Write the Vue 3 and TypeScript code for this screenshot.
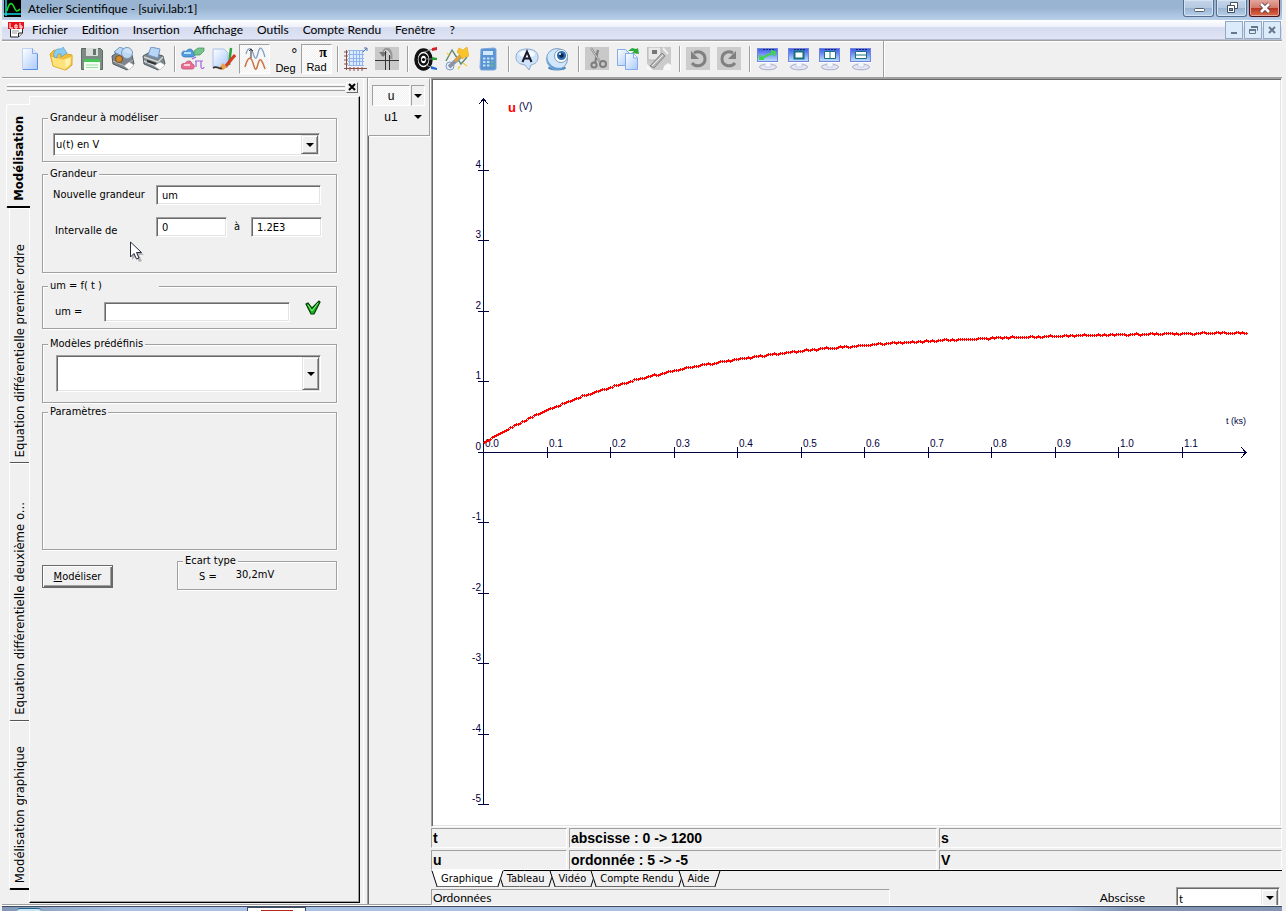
<script setup lang="ts">
import { ref } from 'vue'

const menus: string[] = ['Fichier', 'Edition', 'Insertion', 'Affichage', 'Outils', 'Compte Rendu', 'Fenêtre', '?']

interface ModelTab { id: string; label: string }
const modelTabs: ModelTab[] = [
  { id: 'modelisation', label: 'Modélisation' },
  { id: 'ordre1', label: 'Equation différentielle premier ordre' },
  { id: 'ordre2', label: 'Equation différentielle deuxième o...' },
  { id: 'graphique', label: 'Modélisation graphique' },
]
const activeModelTab = ref('modelisation')

const sheetTabs: string[] = ['Graphique', 'Tableau', 'Vidéo', 'Compte Rendu', 'Aide']
const activeSheet = ref('Graphique')

const target = ref('u(t) en V')
const newName = ref('um')
const from = ref('0')
const to = ref('1.2E3')
const expression = ref('')
const preset = ref('')
const abscissa = ref('t')

const originX = 51
const originY = 372
const pxPerUnitY = 70.5
const pxPerTenth = 63.5

const yTicks = [4, 3, 2, 1, 0, -1, -2, -3, -4, -5].map((v) => ({
  label: String(v),
  y: Math.floor(originY - v * pxPerUnitY),
}))
const xTicks = Array.from({ length: 12 }, (_, i) => ({
  label: (i / 10).toFixed(1),
  x: Math.round(originX + i * pxPerTenth),
}))

function voltage(t: number): number {
  return 1.72 - 1.58 * Math.exp(-t / 0.29)
}

// Each sample is drawn as a small plus sign.
const samples = Array.from({ length: 382 }, (_, i) => {
  const x = originX + i * 2
  const t = (i * 2) / pxPerTenth / 10
  const noise = i > 12 ? Math.sin(i * 1.9) * 0.4 + Math.sin(i * 0.73) * 0.4 : 0
  const y = Math.round(originY - voltage(t) * pxPerUnitY + noise)
  return `M${x - 1} ${y + 0.5}h3M${x + 0.5} ${y - 1}v3`
}).join('')
</script>

<template>
  <div class="window">
    <header class="titlebar">
      <svg class="app-icon" width="17" height="17" viewBox="0 0 17 17" aria-hidden="true">
        <rect width="17" height="17" fill="#000" />
        <path d="M2 0V16M0 14H17" stroke="#12d6e0" stroke-width="1.5" fill="none" />
        <path d="M3 11C5 2 8 2 10 7S13 12 16 9" stroke="#19e01c" stroke-width="1.6" fill="none" />
      </svg>
      <span class="title">Atelier Scientifique - [suivi.lab:1]</span>
      <div class="win-buttons">
        <button class="win-btn" type="button" aria-label="Réduire">
          <svg width="28" height="15" viewBox="0 0 28 15"><rect x="9.5" y="8.5" width="10" height="3" rx="1" fill="#fff" stroke="#55606f" /></svg>
        </button>
        <button class="win-btn" type="button" aria-label="Restaurer">
          <svg width="28" height="15" viewBox="0 0 28 15"><path d="M12.500 2.500h7v6h-7z" fill="#fff" stroke="#454f60" /><path d="M9.500 5.500h7v7h-7z" fill="#fff" stroke="#454f60" /><rect x="11.500" y="8.500" width="3" height="2" fill="#7d97b8" stroke="#454f60" /></svg>
        </button>
        <button class="win-btn close" type="button" aria-label="Fermer">
          <svg width="28" height="15" viewBox="0 0 28 15"><path d="M10 4l8 8M18 4l-8 8" stroke="#5c4048" stroke-width="4.500" /><path d="M10 4l8 8M18 4l-8 8" stroke="#fff" stroke-width="2.600" /></svg>
        </button>
      </div>
    </header>

    <nav class="menubar">
      <svg class="doc-icon" width="17" height="17" viewBox="0 0 17 17" aria-hidden="true">
        <path d="M2.500 3h12v9l-4 4h-8z" fill="#fff" stroke="#222" />
        <path d="M10.500 16v-4h4" fill="#ddd" stroke="#222" />
        <rect x="0" y="1" width="16" height="7" fill="#e8141c" />
        <path d="M2 2v5h3M7 4h2v3H7zM12 2v5h2V5h-2" stroke="#fff" fill="none" />
        <path d="M4 10h7M4 12h5" stroke="#999" />
      </svg>
      <button v-for="m in menus" :key="m" class="menu" type="button">{{ m }}</button>
      <div class="child-buttons">
        <button class="child-btn" type="button" aria-label="Réduire le document"><svg width="16" height="16"><path d="M5 11h6" stroke="#66788e" stroke-width="2" /></svg></button>
        <button class="child-btn" type="button" aria-label="Restaurer le document"><svg width="16" height="16"><path d="M6.500 5V4.500h6v4H12M4.500 7.500h6v4h-6z" fill="none" stroke="#66788e" /><path d="M6 5h7M4 8h7" stroke="#66788e" stroke-width="2" /></svg></button>
        <button class="child-btn" type="button" aria-label="Fermer le document"><svg width="16" height="16"><path d="M5 5l6 6M11 5l-6 6" stroke="#66788e" stroke-width="2" /></svg></button>
      </div>
    </nav>

    <div class="toolbar" role="toolbar" aria-label="Outils">
      <button class="tool" type="button" aria-label="Nouveau">
        <svg viewBox="0 0 24 24"><defs><linearGradient id="paper" x1="0" y1="0" x2="1" y2="1"><stop offset="0" stop-color="#fff" /><stop offset="1" stop-color="#a9c9fb" /></linearGradient></defs><path d="M4.500 1.500h10l5 5v16h-15z" fill="url(#paper)" stroke="#bcd2f4" /><path d="M19.500 7v15.500H5" fill="none" stroke="#5d8fe0" /><path d="M14.500 1.500v5h5" fill="#dbe8ff" stroke="#86aceb" /></svg>
      </button>
      <button class="tool" type="button" aria-label="Ouvrir">
        <svg viewBox="0 0 24 24"><path d="M1 7l4-4 6 1 2 2 10 2v10l-6 5L4 19z" fill="#f3bf3a" stroke="#dba52a" /><path d="M2 9l12 3 9-3-1 9-6 5-12-4z" fill="#ffe27a" stroke="#e9b93c" /><path d="M16 13l5-2v6l-4 4z" fill="#fff0ae" /><path d="M5 10c-1-6 2-9 8-8l1-2 4 6-6 4V7C9 6 8 8 8 11z" fill="#8bcdf0" stroke="#4a97cb" stroke-width=".6" /></svg>
      </button>
      <button class="tool" type="button" aria-label="Enregistrer">
        <svg viewBox="0 0 24 24"><path d="M1.500 1.500h19l2 2v19h-21z" fill="#7e8b84" stroke="#5d6963" /><rect x="6" y="1" width="12" height="8" fill="#d9dedb" /><rect x="13" y="2" width="3" height="6" fill="#68746e" /><rect x="4" y="12" width="16" height="11" fill="#f2fff0" /><path d="M4 12h16v3H4z" fill="#46c65a" /><path d="M6 18h12M6 20.500h12" stroke="#9fdba6" /></svg>
      </button>
      <button class="tool" type="button" aria-label="Aperçu avant impression">
        <svg viewBox="0 0 24 24"><path d="M1 9l7-5 13 4 2 9-7 6-14-6z" fill="#7d868d" stroke="#545b61" /><path d="M2 14l12 5 8-6" fill="none" stroke="#b9bfc4" /><path d="M3 5l6-5 4 2-2 7z" fill="#b9d8f7" stroke="#6f95c3" /><circle cx="16" cy="6" r="5.500" fill="#c6e2fb" fill-opacity=".9" stroke="#7d97b5" /><path d="M12 10l-2 2" stroke="#777" stroke-width="2" /><circle cx="8" cy="12" r="3.500" fill="#d28a2d" stroke="#7c4d13" /><path d="M13 19l5-4 5 3-5 5z" fill="#fff" stroke="#aaa" stroke-width=".6" /></svg>
      </button>
      <button class="tool" type="button" aria-label="Imprimer">
        <svg viewBox="0 0 24 24"><path d="M1 9l7-4 13 4 2 8-7 6-14-6z" fill="#7d868d" stroke="#545b61" /><path d="M6 8L9 0l9 2-2 9z" fill="#b7d5f7" stroke="#6f95c3" /><path d="M2 10l14 5 5-5M2 14l12 5" fill="none" stroke="#d5d9dc" stroke-width="1.400" /><path d="M5 14l9 3" stroke="#333" stroke-width="2" /><path d="M12 19l6-4 5 3-5 5z" fill="#fff" stroke="#aaa" stroke-width=".6" /></svg>
      </button>
      <span class="sep"></span>
      <button class="tool" type="button" aria-label="Variables">
        <svg viewBox="0 0 24 24"><path d="M1 8c-1-4 3-5 4-3 1-4 7-4 7 0 3 0 3 5-1 5H4c-2 0-3-1-3-2z" fill="#4f9de0" stroke="#2d6fae" stroke-width=".7" /><path d="M3 6h7" stroke="#b9e0ff" stroke-width="2" /><path d="M13 4l4-3h6v3l-4 4h-6z" fill="#72c58b" stroke="#3f9159" stroke-width=".7" /><path d="M0 20c0-4 3-4 4-3 1-4 7-4 7 0 3 0 3 5 0 5H3c-2 0-3-1-3-2z" fill="#ea6f93" stroke="#b43e63" stroke-width=".7" /><path d="M3 18h6" stroke="#ffd0de" stroke-width="2" /><path d="M14 14h8M15 14v6M20 14v6c0 2 3 2 3 0M11 12l4-2" fill="none" stroke="#a066d8" stroke-width="1.200" /></svg>
      </button>
      <button class="tool" type="button" aria-label="Dessiner">
        <svg viewBox="0 0 24 24"><path d="M1 2h11l4 4v14H1z" fill="url(#paper)" stroke="#a9c0e6" /><path d="M19 1l-2 17" stroke="#2ca43b" stroke-width="2.500" /><path d="M23 8L13 20" stroke="#d93a24" stroke-width="3" /><path d="M11 16l4 4-4 3-5-1z" fill="#e9a04b" /><path d="M1 21c4-3 6 2 9 0" stroke="#333" stroke-width="1.600" fill="none" /></svg>
      </button>
      <button class="tool pressed" type="button" aria-label="Courbe" aria-pressed="true">
        <svg viewBox="0 0 24 24"><path d="M3 7C5 0 8 0 10 6S13 14 15 6s4-6 7 4" fill="none" stroke="#7f9fc4" stroke-width="1.300" /><path d="M2 20C5 9 8 9 10 16s3 9 5 1 4-4 7 5" fill="none" stroke="#cc7648" stroke-width="1.500" /><path d="M8 2v9M6 4l2-2 2 2" stroke="#333" fill="none" /></svg>
      </button>
      <button class="tool angle" type="button"><span class="symbol">°</span><span>Deg</span></button>
      <button class="tool angle pressed" type="button" aria-pressed="true"><span class="symbol">π</span><span>Rad</span></button>
      <span class="sep"></span>
      <button class="tool" type="button" aria-label="Grille">
        <svg viewBox="0 0 24 24"><path d="M5 3h14v15H5z" fill="#dcebff" /><path d="M5.500 3v16M9.500 3v16M12.500 3v16M15.500 3v16M18.500 3v16M4 3.500h16M4 7.500h16M4 11.500h16M4 14.500h16M4 18.500h16" stroke="#8fb3ea" /><path d="M2.500 3v20M0 21.500h23M0 5h4M0 9h4M0 13h4M0 17h4M6 20v4M10 20v4M14 20v4M18 20v4" stroke="#86514b" /><path d="M19 5l4-4M20 1h3v3" stroke="#5274a8" fill="none" /></svg>
      </button>
      <button class="tool" type="button" aria-label="Réticule">
        <svg viewBox="0 0 24 24"><rect width="24" height="23" fill="#c9c9c9" /><path d="M8 9c0-9 8-9 8 0v3" fill="none" stroke="#999" stroke-width="3" /><path d="M8 9c0-7 6-7 7 0" fill="none" stroke="#eee" /><path d="M4 5h8l-4 5z" fill="#777" /><path d="M0 13.500h24M10.500 4v19M14.500 8v15" stroke="#333" /></svg>
      </button>
      <span class="sep"></span>
      <button class="tool" type="button" aria-label="Pointage">
        <svg viewBox="0 0 24 24"><ellipse cx="9.500" cy="12.500" rx="7.500" ry="9.500" fill="#fff" stroke="#111" stroke-width="3.500" /><ellipse cx="9.500" cy="12.500" rx="3.800" ry="5" fill="#fff" stroke="#111" stroke-width="2.600" /><circle cx="9.500" cy="12.500" r="1.600" /><path d="M10 5l9-3M11 12h8M12 18l7 3" stroke="#888" /><path d="M18 1l5-1v3l-5 1z" fill="#d8202a" /><path d="M18 10l5 1v2l-5 0z" fill="#24a32c" /><path d="M17 19l6 2v2l-6-1z" fill="#2366d8" /></svg>
      </button>
      <button class="tool" type="button" aria-label="Assistant">
        <svg viewBox="0 0 24 24"><path d="M1 14L7 3l9 14 6-7" fill="none" stroke="#5f8b71" stroke-width="1.400" /><circle cx="5" cy="19" r="4" fill="#e6f2ff" stroke="#7c9cc4" /><path d="M4 20L16 9" stroke="#8a94a3" stroke-width="3.800" /><path d="M10 14l5-5" stroke="#e3a33a" stroke-width="3" /><path d="M14 1l4 2 4-3 1 5 1 4-4 1-3 2-2-4-3-3z" fill="#f9c42a" stroke="#e5a313" stroke-width=".6" /><path d="M18 16l4 3M2 6l2 2M13 22l2-3" stroke="#f5cf3e" stroke-width="1.500" /></svg>
      </button>
      <button class="tool" type="button" aria-label="Calculatrice">
        <svg viewBox="0 0 24 24"><path d="M5 2l13-1 2 1v20l-2 1H5l-1-2z" fill="#5b93d3" stroke="#7ba7d8" /><rect x="7" y="4" width="10" height="4" fill="#cfeaff" /><path d="M7 11.500h2.500M11 11.500h2.500M15 11.500h2.500M7 15h2.500M11 15h2.500M7 18.500h2.500M11 18.500h2.500" stroke="#bfe2fa" stroke-width="2" /><path d="M15 15h2.500M15 18.500h2.500" stroke="#59c27c" stroke-width="2" /></svg>
      </button>
      <span class="sep"></span>
      <button class="tool" type="button" aria-label="Commentaire">
        <svg viewBox="0 0 24 24"><path d="M12 2c7 0 11 3 11 8s-3 7-7 8l-2 5-4-5C4 17 1 15 1 10s4-8 11-8z" fill="#cfe3fa" stroke="#8bacd6" /><ellipse cx="12" cy="7" rx="8" ry="3.500" fill="#f4faff" /><path d="M7.500 15L12 4.500l4.500 10.500M9 11.500h6" fill="none" stroke="#1a1a2a" stroke-width="2" /></svg>
      </button>
      <button class="tool" type="button" aria-label="Webcam">
        <svg viewBox="0 0 24 24"><ellipse cx="11" cy="21" rx="9" ry="2.500" fill="#4e88bd" /><circle cx="11" cy="12" r="10.500" fill="#cfe6fb" stroke="#7aa1c9" /><path d="M1 9c1 9 8 14 17 11C10 26 0 20 1 9z" fill="#5d9ad4" /><circle cx="15" cy="9" r="6.500" fill="#fff" stroke="#829bb5" /><circle cx="15.500" cy="8.500" r="4.600" fill="#2d6fb4" /><circle cx="15.500" cy="8.500" r="2.300" fill="#0d2647" /><circle cx="14" cy="7" r="1" fill="#fff" /></svg>
      </button>
      <span class="sep"></span>
      <button class="tool" type="button" aria-label="Couper" disabled>
        <svg viewBox="0 0 24 24"><rect width="24" height="23" fill="#c9c9c9" /><path d="M6 1l9 14M13 3l-3 13" stroke="#808080" stroke-width="2.200" /><path d="M6 1l9 14" stroke="#ededed" stroke-width=".7" /><circle cx="9" cy="18" r="2.600" fill="none" stroke="#7d7d7d" stroke-width="2" /><circle cx="18" cy="17" r="3" fill="none" stroke="#7d7d7d" stroke-width="2" /></svg>
      </button>
      <button class="tool" type="button" aria-label="Copier">
        <svg viewBox="0 0 24 24"><path d="M1.500 2.500h8l4 4v12h-12z" fill="url(#paper)" stroke="#83abeb" /><path d="M9.500 6.500h8l4 4v12h-12z" fill="url(#paper)" stroke="#83abeb" /><path d="M17.500 7v4h4" fill="#fff" stroke="#83abeb" /><path d="M12 4l4-3 4 1 2-1 1 6-7-1 2-2z" fill="#2aa939" /></svg>
      </button>
      <button class="tool" type="button" aria-label="Coller" disabled>
        <svg viewBox="0 0 24 24"><rect width="24" height="23" fill="#cbcbcb" /><path d="M1 0h13v13H1z" fill="#e9e9e9" stroke="#b5b5b5" /><path d="M5 3h5v4H5z" fill="#777" /><path d="M3 19L15 6l3 3L7 21z" fill="#b4b4b4" stroke="#888" /><path d="M5 19L16 8" stroke="#eee" /><path d="M0 17l6 6H0zM17 19l4-3 3 2v5h-8z" fill="#f8f8f8" /><path d="M16 1l5 6" stroke="#eee" stroke-width="2" /></svg>
      </button>
      <span class="sep"></span>
      <button class="tool" type="button" aria-label="Annuler" disabled>
        <svg viewBox="0 0 24 24"><rect width="24" height="23" fill="#cdcdcd" /><path d="M8 6c5-3 11 0 11 6 0 7-9 9-13 4" fill="none" stroke="#808080" stroke-width="3" /><path d="M5 4v8h8z" fill="#808080" /></svg>
      </button>
      <button class="tool" type="button" aria-label="Rétablir" disabled>
        <svg viewBox="0 0 24 24"><rect width="24" height="23" fill="#cdcdcd" /><path d="M16 6C11 3 5 6 5 12c0 7 9 9 13 4" fill="none" stroke="#808080" stroke-width="3" /><path d="M19 4v8h-8z" fill="#808080" /></svg>
      </button>
      <span class="sep"></span>
      <button v-for="kind in 4" :key="kind" class="tool" type="button" :aria-label="'Disposition ' + kind">
        <svg viewBox="0 0 24 24"><defs><linearGradient id="screen" x1="0" y1="0" x2="0" y2="1"><stop offset="0" stop-color="#3c55e8" /><stop offset="1" stop-color="#bfe3ff" /></linearGradient></defs>
          <ellipse cx="12" cy="20" rx="8.500" ry="2.800" fill="#e6e9f4" stroke="#a9adc6" /><path d="M9 15h6v5H9z" fill="#f3f5fc" stroke="#b5bcd6" stroke-width=".6" />
          <rect x="1.500" y="1.500" width="20" height="13" fill="url(#screen)" stroke="#6f86dc" /><path d="M1 15.500h21" stroke="#fff" /><path d="M7 2.500h12" stroke="#14246e" stroke-dasharray="2 1" />
          <path v-if="kind === 1" d="M4 11l4-1 4-2 5-2M4 8v4h4M15 4l4 1-1 4" fill="none" stroke="#3fd54d" stroke-width="2" />
          <rect v-if="kind === 2" x="7.500" y="4.500" width="9" height="7" fill="#fff" stroke="#14727f" stroke-width="2" />
          <path v-if="kind === 3" d="M6.500 4.500h11v7h-11zM12 4v8" fill="#fff" stroke="#14727f" />
          <path v-if="kind === 4" d="M6.500 4.500h11v7h-11zM6 8h12" fill="#fff" stroke="#14727f" />
        </svg>
      </button>
      <span class="sep end"></span>
    </div>

    <div class="workspace">
      <aside class="dock">
        <div class="dock-head">
          <div class="grip"><i></i><i></i></div>
          <button class="dock-close" type="button" aria-label="Fermer le panneau"><svg width="10" height="8"><path d="M2 1l6 6M8 1l-6 6" stroke="#000" stroke-width="2" /></svg></button>
        </div>
        <div class="dock-body">
          <div class="vtabs" role="tablist" aria-orientation="vertical">
            <button
              v-for="t in modelTabs"
              :key="t.id"
              type="button"
              role="tab"
              class="vtab"
              :class="[t.id, { active: t.id === activeModelTab }]"
              :aria-selected="t.id === activeModelTab"
              @click="activeModelTab = t.id"
            ><span>{{ t.label }}</span></button>
          </div>

          <form class="model" @submit.prevent>
            <fieldset class="f-target">
              <legend>Grandeur à modéliser</legend>
              <div class="combo sunken">
                <select v-model="target" aria-label="Grandeur à modéliser"><option>u(t) en V</option><option>u1(t) en V</option></select>
                <span class="drop"></span>
              </div>
            </fieldset>

            <fieldset class="f-name">
              <legend>Grandeur</legend>
              <div class="grid">
                <label for="new-name">Nouvelle grandeur</label>
                <input id="new-name" v-model="newName" class="sunken wide" type="text" />
                <label for="from" class="low">Intervalle de</label>
                <input id="from" v-model="from" class="sunken" type="text" />
                <label for="to" class="to">à</label>
                <input id="to" v-model="to" class="sunken" type="text" />
              </div>
              <svg class="pointer" width="16" height="22" viewBox="0 0 16 22" aria-hidden="true"><path d="M3 3v16l4-4 3 6 3-1-3-6h5z" fill="#000" opacity=".25" /><path d="M1.500 1v15l3.500-3.500 2.500 5.500 2.500-1-2.500-5.500h5z" fill="#fff" stroke="#222a3c" /></svg>
            </fieldset>

            <fieldset class="f-expr">
              <legend>um = f( t )</legend>
              <div class="line">
                <label for="expr">um =</label>
                <input id="expr" v-model="expression" class="sunken" type="text" />
                <button class="check" type="button" aria-label="Valider">
                  <svg width="17" height="17" viewBox="0 0 17 17"><path d="M1 4l2-1 4 5 7-7 1 1L9 14H6z" fill="#17b81d" stroke="#053d08" stroke-width="1.200" /><path d="M3 5l4 6 6-8" fill="none" stroke="#8bf08d" /></svg>
                </button>
              </div>
            </fieldset>

            <fieldset class="f-preset">
              <legend>Modèles prédéfinis</legend>
              <div class="combo sunken tall">
                <select v-model="preset" aria-label="Modèles prédéfinis"><option value=""></option></select>
                <span class="drop"></span>
              </div>
            </fieldset>

            <fieldset class="f-params"><legend>Paramètres</legend></fieldset>

            <div class="result">
              <button class="run" type="submit"><u>M</u>odéliser</button>
              <fieldset class="f-dev">
                <legend>Ecart type</legend>
                <div class="dev"><span>S =</span><output>30,2mV</output></div>
              </fieldset>
            </div>
          </form>
        </div>
      </aside>

      <div class="vars">
        <div class="var-bar">
          <div class="var"><button class="var-name on" type="button" aria-pressed="true">u</button><button class="var-drop on" type="button" aria-label="Options de u"></button></div>
          <div class="var"><button class="var-name" type="button">u1</button><button class="var-drop" type="button" aria-label="Options de u1"></button></div>
        </div>
      </div>

      <main class="main">
        <div class="chart sunken">
          <svg viewBox="0 0 847 744" preserveAspectRatio="xMinYMin meet" role="img" aria-label="u en fonction de t">
            <g stroke="#000040" shape-rendering="crispEdges" fill="none">
              <path d="M50.500 19V724M46 24l4.500-5 4.500 5" />
              <path d="M45 372.500H812M808 367l5 5.500-5 5.500" />
              <path v-for="t in yTicks" :key="t.label" :d="`M45 ${t.y + 0.5}h11`" />
              <path v-for="t in xTicks.slice(1)" :key="t.label" :d="`M${t.x - 0.5} 367v11`" />
            </g>
            <g class="axis">
              <text v-for="t in yTicks" :key="t.label" x="48" :y="t.y - 2" text-anchor="end">{{ t.label }}</text>
              <text v-for="t in xTicks" :key="t.label" :x="t.x + 1" y="367">{{ t.label }}</text>
              <text x="813" y="344" text-anchor="end" class="unit">t (ks)</text>
              <text x="86" y="30">(V)</text>
            </g>
            <text x="75" y="32" class="series">u</text>
            <path :d="samples" fill="none" stroke="#f00" shape-rendering="crispEdges" />
          </svg>
        </div>

        <div class="info">
          <div>t</div><div>abscisse : 0 -&gt; 1200</div><div>s</div>
          <div>u</div><div>ordonnée : 5 -&gt; -5</div><div>V</div>
        </div>

        <div class="sheets" role="tablist">
          <button
            v-for="s in sheetTabs"
            :key="s"
            type="button"
            role="tab"
            class="sheet"
            :class="{ active: s === activeSheet }"
            :aria-selected="s === activeSheet"
            @click="activeSheet = s"
          ><span>{{ s }}</span></button>
          <i class="rule"></i>
        </div>

        <div class="status">
          <div class="status-text">Ordonnées</div>
          <label for="abscissa">Abscisse</label>
          <div class="combo sunken abscissa">
            <select id="abscissa" v-model="abscissa"><option>t</option></select>
            <span class="drop"></span>
          </div>
        </div>
      </main>
    </div>

    <footer class="taskbar" aria-hidden="true"><i class="orb"></i><i class="task"></i></footer>
  </div>
</template>

<style>
html,
body {
  background: #f0f0f0;
}
</style>

<style scoped>
* {
  box-sizing: border-box;
}
.window {
  min-height: 100vh;
  padding: 0 4px 0 2px;
  display: flex;
  flex-direction: column;
  background: #f0f0f0;
  color: #000;
  font: 11px/14px "DejaVu Sans Condensed", "Noto Sans", sans-serif;
}
button,
input,
select {
  font: inherit;
  color: inherit;
  margin: 0;
  padding: 0;
  border: 0;
  border-radius: 0;
  background: none;
}
svg {
  display: block;
}
.sunken {
  border: 1px solid;
  border-color: #a0a0a0 #fff #fff #a0a0a0;
  box-shadow: inset 1px 1px #696969, inset -1px -1px #e3e3e3;
}

.titlebar {
  height: 20px;
  display: flex;
  align-items: flex-start;
  padding-left: 2px;
  background: linear-gradient(#98b4d2, #99b4d1 40%, #b9d0ea);
}
.title {
  flex: 1;
  padding-left: 7px;
  font: 12px/18px Lato, "Noto Sans", sans-serif;
}
.win-buttons {
  display: flex;
  gap: 2px;
  padding-right: 2px;
}
.win-btn {
  width: 31px;
  height: 17px;
  display: flex;
  justify-content: center;
  border: 1px solid #55708f;
  border-top: 0;
  border-radius: 0 0 3px 3px;
  background: linear-gradient(#c5d5e9, #b4c8e0 50%, #98b3d2 50%, #b8d0ea);
  box-shadow: inset 0 0 0 1px #d5e2f1;
}
.win-btn.close {
  border-color: #4d1018;
  background: linear-gradient(#e3a79b, #d3796a 50%, #b83322 50%, #d86f4b);
  box-shadow: inset 0 0 0 1px #e2a59b;
}
.menubar {
  height: 20px;
  display: flex;
  align-items: center;
  padding-left: 6px;
  background: linear-gradient(#fff, #eef1f9 35%, #d5dcef 40%, #e0e4f4);
  border-bottom: 1px solid #b9bed0;
  font: 12px/18px Lato, "Noto Sans", sans-serif;
}
.doc-icon {
  margin-right: 7px;
}
.menu {
  margin-right: 14px;
}
.child-buttons {
  margin-left: auto;
  display: flex;
  gap: 1px;
  padding-right: 1px;
}
.child-btn {
  width: 18px;
  height: 18px;
  border: 1px solid #93a8c4;
  background: #dcebfa;
}

.toolbar {
  height: 38px;
  display: flex;
  align-items: center;
  padding: 0 0 0 12px;
  border-top: 1px solid #a0a0a0;
  border-bottom: 1px solid #a0a0a0;
  box-shadow: inset 0 1px #fff;
}
.tool {
  flex: 0 0 31px;
  height: 30px;
  display: grid;
  place-items: center;
}
.tool svg {
  width: 24px;
  height: 24px;
}
.pressed,
.on {
  border: 1px solid;
  border-color: #a0a0a0 #fff #fff #a0a0a0;
  background: repeating-conic-gradient(#fff 0 25%, #f0f0f0 0 50%) 0 0 / 2px 2px;
}
.angle {
  display: flex;
  flex-direction: column;
  align-items: center;
  justify-content: flex-end;
  font: 11px/12px "Liberation Sans", sans-serif;
}
.angle .symbol {
  align-self: flex-end;
  padding-right: 4px;
  font: bold 14px/16px "Liberation Serif", serif;
}
.sep {
  flex: 0 0 8px;
  height: 26px;
  border-left: 1px solid #a0a0a0;
  margin-left: 5px;
  margin-right: -5px;
  box-shadow: inset 1px 0 #fff;
}
.sep.end {
  margin-left: 7px;
  align-self: stretch;
  height: auto;
}

.workspace {
  flex: 1;
  display: flex;
}
.dock {
  flex: 0 0 365px;
  display: flex;
  flex-direction: column;
  padding: 3px 7px 1px 4px;
  border-bottom: 1px solid #a0a0a0;
  box-shadow: inset 0 1px #fff, inset -3px 0 #f0f0f0, inset -4px 0 #fff;
}
.dock-head {
  display: flex;
  align-items: center;
  gap: 1px;
  height: 12px;
  margin-right: 2px;
}
.grip {
  flex: 1;
  display: grid;
  gap: 1px;
  padding-left: 1px;
}
.grip i {
  height: 3px;
  border-top: 1px solid #fff;
  border-bottom: 1px solid #a0a0a0;
}
.dock-close {
  width: 12px;
  height: 11px;
  display: grid;
  place-items: center;
  border: 1px solid;
  border-color: #fff #696969 #696969 #fff;
}
.dock-body {
  flex: 1;
  display: flex;
  padding-top: 3px;
}
.vtabs {
  flex: 0 0 23px;
  display: flex;
  flex-direction: column;
  align-items: flex-end;
  padding-top: 8px;
}
.vtab {
  width: 20px;
  display: flex;
  align-items: flex-end;
  justify-content: center;
  padding-bottom: 5px;
  border: 1px solid;
  border-color: #fff transparent #555 #fff;
  border-right: 0;
  border-radius: 2px 0 0 2px;
  font: 13px/16px "DejaVu Sans Condensed", sans-serif;
}
.vtab span {
  writing-mode: vertical-rl;
  transform: rotate(180deg);
  white-space: nowrap;
}
.vtab.active {
  width: 24px;
  margin-right: -1px;
  border-bottom: 2px solid #000;
  background: #f0f0f0;
  font-weight: bold;
  position: relative;
}
.modelisation {
  height: 104px;
}
.ordre1 {
  height: 255px;
}
.ordre2 {
  height: 258px;
}
.graphique {
  height: 169px;
  border-bottom: 2px solid #000;
}
.model {
  flex: 1;
  min-width: 0;
  padding: 14px 22px 12px 12px;
  border: 1px solid;
  border-color: #fff #000 #000 #fff;
  box-shadow: inset -1px -1px #a0a0a0;
}
fieldset {
  min-width: 0;
  margin: 0;
  padding: 0;
  border: 1px solid #a0a0a0;
  box-shadow: 1px 1px #fff, inset 1px 1px #fff;
}
legend {
  margin-left: 5px;
  padding: 0 2px;
  background: #f0f0f0;
  white-space: nowrap;
}
.combo {
  display: grid;
  height: 23px;
  padding: 1px;
  background: #fff;
}
.combo select {
  grid-area: 1 / 1;
  appearance: none;
  width: 100%;
  height: 100%;
  padding: 0 18px 0 1px;
  outline: 0;
}
.drop {
  grid-area: 1 / 1;
  justify-self: end;
  width: 17px;
  display: grid;
  place-items: center;
  pointer-events: none;
  background: #f0f0f0;
  border: 1px solid;
  border-color: #e3e3e3 #696969 #696969 #e3e3e3;
  box-shadow: inset 1px 1px #fff, inset -1px -1px #a0a0a0;
}
.drop::before,
.var-drop::before {
  content: "";
  border: 4px solid transparent;
  border-top-color: #000;
  border-bottom: 0;
}
.f-target {
  height: 51px;
}
.f-target .combo {
  margin: 8px 16px 0 10px;
}
.f-name {
  height: 106px;
  margin-top: 5px;
  position: relative;
}
.grid {
  display: grid;
  grid-template-columns: 103px 71px 24px 71px;
  grid-auto-rows: 20px;
  row-gap: 12px;
  align-items: center;
  padding: 4px 0 0 10px;
}
.grid input,
.line input {
  width: 100%;
  height: 20px;
  padding: 0 5px;
  background: #fff;
}
.grid .wide {
  grid-column: 2 / 5;
  width: 165px;
}
.grid .low {
  padding: 8px 0 0 2px;
}
.grid .to {
  padding-left: 7px;
}
.pointer {
  position: absolute;
  left: 86px;
  top: 60px;
}
.f-expr {
  height: 50px;
  margin-top: 6px;
}
.f-expr legend {
  width: 111px;
}
.line {
  display: grid;
  grid-template-columns: 49px 186px 17px;
  padding: 7px 0 0 12px;
}
.line input {
  margin-top: 2px;
}
.line label {
  padding-top: 5px;
}
.line .check {
  height: 17px;
  margin-left: 15px;
}
.f-preset {
  height: 66px;
  margin-top: 8px;
}
.tall {
  height: 37px;
  margin: 4px 15px 0 13px;
}
.f-params {
  height: 145px;
  margin-top: 2px;
}
.result {
  display: flex;
  justify-content: space-between;
  padding-top: 4px;
}
.run {
  width: 71px;
  height: 23px;
  margin-top: 11px;
  border: 1px solid #696969;
  box-shadow: inset 1px 1px #fff, inset -1px -1px #696969, inset -2px -2px #a0a0a0;
}
.f-dev {
  width: 160px;
  height: 36px;
}
.dev {
  display: flex;
  gap: 19px;
  padding-left: 21px;
}
.dev span {
  padding-top: 2px;
}

.vars {
  flex: 0 0 64px;
  border-left: 1px solid #a0a0a0;
  box-shadow: inset 1px 0 #696969;
  border-bottom: 1px solid #a0a0a0;
}
.var-bar {
  margin-right: 1px;
  height: 58px;
  padding: 6px 0 0 3px;
  display: grid;
  grid-auto-rows: 21px;
  align-content: start;
  background: #f0f0f0;
  border: 1px solid #a0a0a0;
  border-color: #fff #a0a0a0 #a0a0a0 #fff;
  box-shadow: 1px 1px #fff;
}
.var {
  display: flex;
  gap: 1px;
  font: 12px/18px "Liberation Sans", sans-serif;
}
.var-name {
  width: 38px;
}
.var-drop {
  width: 14px;
  display: grid;
  place-items: center;
}
.var-drop.on {
  background: #f0f0f0;
}

.main {
  flex: 1;
  min-width: 0;
  display: flex;
  flex-direction: column;
}
.chart {
  flex: 1;
  padding: 1px;
  background: #fff;
}
.chart svg {
  width: 100%;
}
.axis {
  font: 10px "Liberation Sans", sans-serif;
  fill: #000040;
}
.axis .unit {
  font-size: 9px;
}
.series {
  font: bold 13px "Liberation Sans", sans-serif;
  fill: #f00;
}
.info {
  display: grid;
  grid-template-columns: 136px 368fr 343fr;
  grid-auto-rows: 20px;
  gap: 2px;
  padding-top: 1px;
  font: bold 14px/19px "Liberation Sans", sans-serif;
}
.info div {
  padding-left: 1px;
  border: 1px solid;
  border-color: #a0a0a0 #fff #fff #a0a0a0;
}
.sheets {
  display: flex;
  height: 17px;
  padding-left: 3px;
}
.sheet {
  position: relative;
  padding: 1px 11px 0 7px;
  margin-right: -4px;
}
.sheet span {
  position: relative;
  z-index: 1;
}
.sheet::before,
.sheet::after {
  content: "";
  position: absolute;
  top: 0;
  bottom: 0;
  background: #f0f0f0;
  border-top: 1px solid #000;
  border-bottom: 1px solid #696969;
}
.sheet::before {
  left: 0;
  right: 50%;
  border-left: 1px solid #000;
  transform: skewX(18deg);
}
.sheet::after {
  left: 40%;
  right: 3px;
  border-right: 1px solid #000;
  transform: skewX(-18deg);
}
.sheet.active {
  z-index: 1;
}
.sheet.active::before,
.sheet.active::after {
  background: #fff;
  border-top-color: #fff;
}
.rule {
  flex: 1;
  height: 1px;
  background: #000;
}
.status {
  display: flex;
  align-items: flex-start;
  height: 18px;
  overflow: hidden;
  font: 12px/15px Lato, "Noto Sans", sans-serif;
}
.status-text {
  flex: 0 1 459px;
  height: 16px;
  margin-top: 2px;
  padding-left: 1px;
  border: 1px solid;
  border-color: #a0a0a0 #fff transparent #a0a0a0;
}
.status label {
  margin-left: auto;
  margin-top: 3px;
}
.abscissa {
  width: 104px;
  height: 22px;
  margin: 0 2px 0 31px;
  font-size: 11px;
}
.taskbar {
  height: 6px;
  display: flex;
  align-items: flex-end;
  border-top: 1px solid #fff;
  background: linear-gradient(90deg, #8297b6, #a9c2e3 9%, #a9c2e3 83%, #8294b2 88%);
  box-shadow: inset 0 1px #3f4b5e;
}
.orb {
  width: 24px;
  height: 3px;
  margin-left: 15px;
  border-radius: 12px 12px 0 0;
  background: #cbe3f5;
  border-top: 1px solid #1b6687;
}
.task {
  width: 59px;
  height: 4px;
  margin-left: 206px;
  border: 1px solid #3f4b5e;
  border-bottom: 0;
  background: linear-gradient(#b4281c, #b4281c) 50% 100% / 32px 1px no-repeat #fff;
}
</style>
